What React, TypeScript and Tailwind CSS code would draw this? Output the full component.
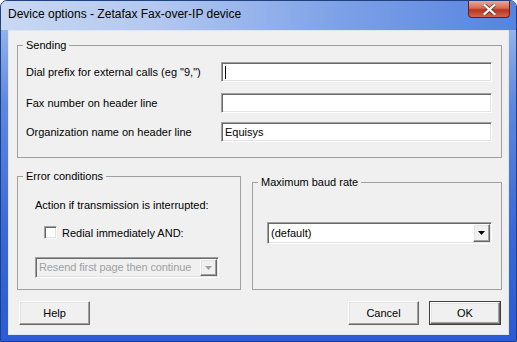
import React from 'react';

// Classic Win32 3D edges
const SUNKEN =
    'border border-t-[#a0a0a0] border-l-[#a0a0a0] border-r-white border-b-white shadow-[inset_1px_1px_0_#696969,inset_-1px_-1px_0_#e3e3e3]';
const RAISED =
    'border border-t-white border-l-white border-r-[#696969] border-b-[#696969] shadow-[inset_-1px_-1px_0_#a0a0a0,inset_1px_1px_0_#e3e3e3]';

const FONT = { fontFamily: '"Liberation Sans", Arial, sans-serif' };

function TextBox({ value, caret }: { value?: string; caret?: boolean }) {
    return (
        <div className={`w-[271px] h-[20px] bg-white flex items-center pl-[3px] text-[11px] text-black ${SUNKEN}`}>
            {caret && <span className="w-px h-[13px] bg-black" />}
            {value}
        </div>
    );
}

function DropArrow({ disabled }: { disabled?: boolean }) {
    return (
        <div className={`w-[17px] h-full bg-[#f0f0f0] flex items-center justify-center ${RAISED}`}>
            <svg width="7" height="4" viewBox="0 0 7 4">
                <path d="M0 0h7L3.5 4z" fill={disabled ? '#a0a0a0' : '#000'} />
            </svg>
        </div>
    );
}

function Legend({ children }: { children: React.ReactNode }) {
    return <legend className="px-[3px] text-[11px] leading-[13px] text-black">{children}</legend>;
}

function Button({ label, isDefault, className = '' }: { label: string; isDefault?: boolean; className?: string }) {
    if (isDefault) {
        return (
            <div className={`w-[72px] h-[24px] border border-[#404040] ${className}`}>
                <div className={`w-full h-full bg-[#f0f0f0] flex items-center justify-center text-[11px] text-black ${RAISED}`}>
                    {label}
                </div>
            </div>
        );
    }
    return (
        <div className={`w-[71px] h-[24px] bg-[#f0f0f0] flex items-center justify-center text-[11px] text-black ${RAISED} ${className}`}>
            {label}
        </div>
    );
}

export default function App() {
    return (
        <div
            style={FONT}
            className="w-[517px] h-[342px] rounded-t-[7px] border border-[#21407e] bg-[linear-gradient(to_bottom,#a9c1ee_0%,#5d88e0_30%,#3767d8_70%,#2a5bd6_100%)] flex flex-col overflow-hidden"
        >
            {/* Title bar */}
            <div className="h-[29px] shrink-0 flex items-start justify-between bg-[linear-gradient(to_right,#c9d8f3_0%,#b3c8f0_30%,#7ea2e8_65%,#5683e0_100%)]">
                <span className="pl-[7px] pt-[6px] text-[12px] leading-[15px] text-black">
                    Device options - Zetafax Fax-over-IP device
                </span>
                <div className="mr-[6px] w-[42px] h-[17px] rounded-b-[4px] border border-t-0 border-[#6b1d14] bg-[linear-gradient(to_bottom,#e9aa9a_0%,#d36a55_45%,#b83420_55%,#d0654c_100%)] flex items-center justify-center">
                    <svg width="13" height="11" viewBox="0 0 13 11">
                        <path d="M1.5 1L11.5 10M11.5 1L1.5 10" stroke="#6b2a20" strokeWidth="3.6" strokeLinecap="square" />
                        <path d="M1.5 1L11.5 10M11.5 1L1.5 10" stroke="#ffffff" strokeWidth="2.2" strokeLinecap="square" />
                    </svg>
                </div>
            </div>

            {/* Client area */}
            <div className="flex-1 mx-[7px] mb-[6px] bg-[#f0f0f0] border border-[#dfe6f2] flex flex-col pl-[8px]">
                {/* Sending */}
                <fieldset className="mt-[8px] w-[485px] border border-[#a0a0a0] pl-[5px] pr-[9px] pb-[15px]">
                    <Legend>Sending</Legend>
                    <div className="flex items-center justify-between mt-[10px] text-[11px] text-black">
                        <span className="pl-[3px]">Dial prefix for external calls (eg "9,")</span>
                        <TextBox caret />
                    </div>
                    <div className="flex items-center justify-between mt-[11px] text-[11px] text-black">
                        <span className="pl-[3px]">Fax number on header line</span>
                        <TextBox />
                    </div>
                    <div className="flex items-center justify-between mt-[9px] text-[11px] text-black">
                        <span className="pl-[3px]">Organization name on header line</span>
                        <TextBox value="Equisys" />
                    </div>
                </fieldset>

                <div className="flex items-start gap-[11px]">
                    {/* Error conditions */}
                    <fieldset className="mt-[12px] w-[224px] h-[120px] border border-[#a0a0a0] pl-[5px]">
                        <Legend>Error conditions</Legend>
                        <div className="ml-[12px] mt-[14px] text-[11px] text-black">Action if transmission is interrupted:</div>
                        <div className="ml-[21px] mt-[11px] flex items-center gap-[5px] text-[11px] text-black">
                            <div className={`w-[13px] h-[13px] bg-white ${SUNKEN}`} />
                            <span>Redial immediately AND:</span>
                        </div>
                        <div className={`ml-[12px] mt-[16px] w-[184px] h-[21px] bg-[#f0f0f0] flex items-center justify-between ${SUNKEN} p-px`}>
                            <span className="pl-[2px] text-[11px] tracking-[-0.1px] text-[#a0a0a0]">Resend first page then continue</span>
                            <DropArrow disabled />
                        </div>
                    </fieldset>

                    {/* Maximum baud rate */}
                    <fieldset className="mt-[18px] w-[250px] h-[114px] border border-[#a0a0a0] pl-[5px]">
                        <Legend>Maximum baud rate</Legend>
                        <div className={`ml-[9px] mt-[33px] w-[225px] h-[22px] bg-white flex items-center justify-between ${SUNKEN} p-px`}>
                            <span className="pl-[2px] text-[11px] text-black">(default)</span>
                            <DropArrow />
                        </div>
                    </fieldset>
                </div>

                {/* Buttons */}
                <div className="mt-[11px] flex items-center pr-[7px]">
                    <Button label="Help" className="ml-[2px]" />
                    <div className="flex-1" />
                    <Button label="Cancel" />
                    <Button label="OK" isDefault className="ml-[10px]" />
                </div>
            </div>
        </div>
    );
}
